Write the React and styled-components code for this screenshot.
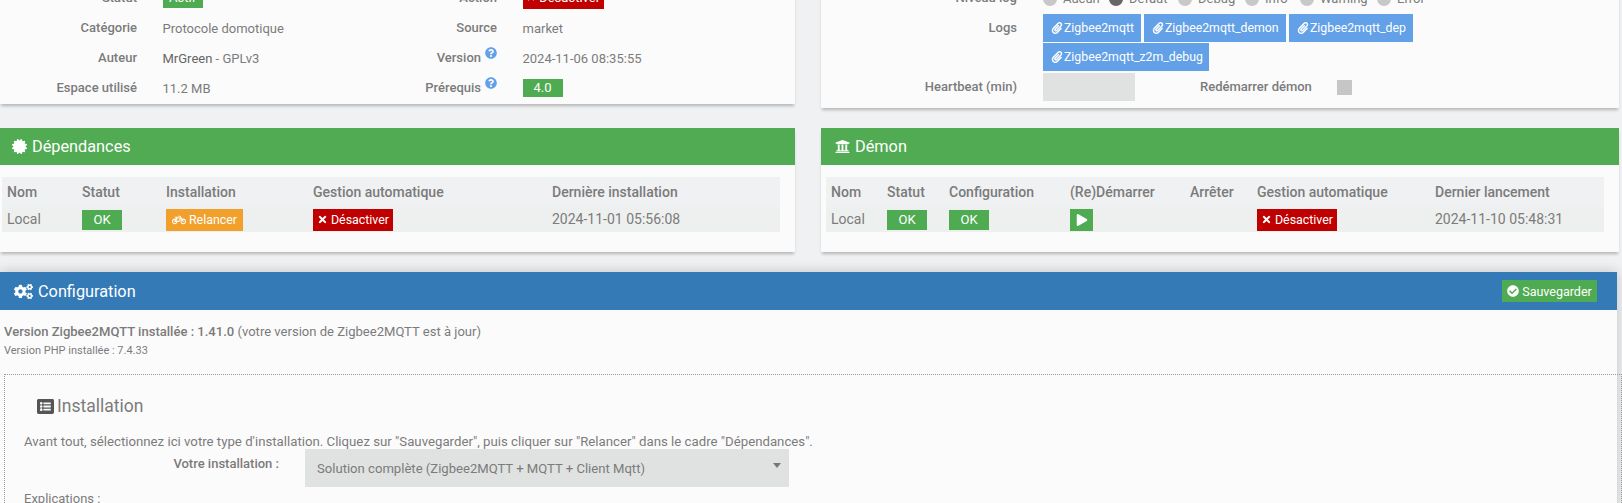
import styled, { createGlobalStyle } from "styled-components";
import {
  FaBicycle,
  FaCertificate,
  FaCheckCircle,
  FaCogs,
  FaListAlt,
  FaPaperclip,
  FaPlay,
  FaQuestionCircle,
  FaTimes,
  FaUniversity,
} from "react-icons/fa";

const GlobalStyle = createGlobalStyle`
  html, body {
    margin: 0;
    padding: 0;
    height: 503px;
    overflow: hidden;
    background: #f0f1f3;
  }
  body {
    font-family: Roboto, "Liberation Sans", sans-serif;
    font-size: 13px;
    color: #7b7b7b;
  }
`;

const Page = styled.div`
  width: 1622px;
  height: 503px;
  overflow: hidden;
`;

const Columns = styled.div`
  display: grid;
  grid-template-columns: 795px 798px;
  column-gap: 26px;
  align-items: start;
  margin-top: -17px;
`;

const Stack = styled.div`
  display: flex;
  flex-direction: column;
`;

const Panel = styled.section`
  background: #fbfbfb;
  box-shadow: 0 3px 3px -1px rgba(0, 0, 0, 0.25);
  margin-bottom: ${(p) => p.$gap || 20}px;
`;

const Header = styled.header`
  display: flex;
  align-items: center;
  justify-content: space-between;
  height: ${(p) => p.$height || 37}px;
  padding: 0 ${(p) => p.$right || 0}px 0 ${(p) => p.$left || 12}px;
  background: ${(p) => p.$color};
  color: #fff;
  font-size: 16.3px;
`;

const HeaderTitle = styled.div`
  display: flex;
  align-items: center;
  gap: 5px;
`;

const InfoGrid = styled.div`
  display: grid;
  grid-template-columns: 137px 200px 109px 1fr;
  column-gap: 25.5px;
  grid-auto-rows: 30px;
  align-items: center;
  padding-bottom: 1px;
`;

const Label = styled.div`
  text-align: right;
  font-weight: 500;
  line-height: 16px;
  white-space: nowrap;
`;

const Help = styled(FaQuestionCircle)`
  color: #62a0e8;
  font-size: 12px;
  margin: -3px 0 0 4px;
  vertical-align: top;
`;

const Value = styled.div`
  white-space: nowrap;
`;

const Strong = styled.span`
  font-weight: 500;
`;

const Author = styled.span`
  color: #666;
`;

const Badge = styled.span`
  display: inline-block;
  min-width: ${(p) => p.$width || 40}px;
  height: ${(p) => p.$height || 20}px;
  line-height: ${(p) => p.$height || 20}px;
  box-sizing: border-box;
  text-align: center;
  color: #fff;
  font-size: 13px;
  background: ${(p) => p.$color || "#4fab52"};
`;

const Action = styled.span`
  display: inline-flex;
  align-items: center;
  justify-content: center;
  gap: 3px;
  box-sizing: border-box;
  width: ${(p) => p.$width}px;
  height: 22px;
  color: #fff;
  font-size: 12.4px;
  background: ${(p) => p.$color};
`;

const SettingsGrid = styled.div`
  display: grid;
  grid-template-columns: 196px 1fr;
  column-gap: 26px;
  padding: 3px 0 7px;
`;

const RadioRow = styled.div`
  display: flex;
  align-items: center;
  box-sizing: border-box;
  height: 28px;
  padding-bottom: 3px;
`;

const RadioItem = styled.span`
  display: inline-flex;
  align-items: center;
  gap: 6px;
  width: ${(p) => p.$width}px;
`;

const Radio = styled.span`
  width: 14px;
  height: 14px;
  border-radius: 50%;
  background: ${(p) => (p.$on ? "#666" : "#c8c8c8")};
`;

const RowLabel = styled(Label)`
  line-height: 28px;
  margin-top: ${(p) => p.$top || 0}px;
`;

const LogList = styled.div`
  display: flex;
  flex-wrap: wrap;
  gap: 1px 3px;
  width: 372px;
`;

const LogButton = styled.span`
  display: inline-flex;
  align-items: center;
  gap: 1px;
  box-sizing: border-box;
  width: ${(p) => p.$width}px;
  height: 28px;
  padding-left: 8px;
  background: #62a0e8;
  color: #fff;
  font-size: 12.3px;
  white-space: nowrap;
`;

const HeartRow = styled.div`
  display: flex;
  align-items: center;
  margin-top: 2px;
`;

const GreyInput = styled.div`
  width: 92px;
  height: 28px;
  background: #e0e2e1;
`;

const RestartLabel = styled(Label)`
  margin-left: 65px;
  width: 137px;
  text-align: left;
`;

const GreyCheck = styled.span`
  width: 15px;
  height: 15px;
  background: #c6c6c6;
`;

const TableBody = styled.div`
  padding: 12px ${(p) => p.$right}px 20px ${(p) => p.$left}px;
`;

const Table = styled.table`
  width: 100%;
  table-layout: fixed;
  border-collapse: collapse;
  font-size: 14px;
`;

const Th = styled.th`
  box-sizing: border-box;
  width: ${(p) => p.$width}px;
  height: 30px;
  padding: 0 5px;
  text-align: left;
  font-weight: 500;
  background: #f0f1f2;
  white-space: nowrap;
`;

const Td = styled.td`
  height: 25px;
  padding: 0 5px;
  background: #eef0ef;
  white-space: nowrap;
  vertical-align: middle;
  line-height: 0;
`;

const CellText = styled.span`
  line-height: 25px;
`;

const ConfigPanel = styled(Panel)`
  width: 1617px;
  box-shadow: 0 0 12px rgba(0, 0, 0, 0.2);
  margin: 0;
  height: 240px;
`;

const SaveButton = styled.span`
  display: inline-flex;
  align-items: center;
  justify-content: center;
  gap: 3px;
  width: 95px;
  height: 22px;
  background: #4fab52;
  color: #fff;
  font-size: 12.5px;
`;

const ConfigBody = styled.div`
  padding: 14px 4px 0;
`;

const VersionLine = styled.div`
  font-size: 13.05px;
  line-height: 16px;
`;

const PhpLine = styled.div`
  font-size: 11px;
  line-height: 14px;
  margin-top: 4px;
`;

const Fieldset = styled.div`
  width: 1578px;
  margin-top: 16px;
  padding: 19px 19px 0;
  border: 1px dotted #999;
  border-bottom: none;
`;

const Legend = styled.h3`
  display: flex;
  align-items: center;
  gap: 3px;
  margin: 0 0 0 13px;
  font-size: 17.5px;
  font-weight: 400;
  line-height: 24px;
  svg {
    color: #555;
  }
`;

const Intro = styled.p`
  margin: 16px 0 0;
  font-size: 13.23px;
  line-height: 16px;
`;

const FieldRow = styled.div`
  display: flex;
  margin-top: -1px;
`;

const FieldLabel = styled(Label)`
  width: 255px;
  font-size: 13px;
  line-height: 30px;
`;

const Select = styled.div`
  position: relative;
  box-sizing: border-box;
  width: 484px;
  height: 38px;
  margin-left: 26px;
  padding-left: 12px;
  line-height: 39px;
  font-size: 13.1px;
  background: #e0e2e1;
  &::after {
    content: "";
    position: absolute;
    right: 8px;
    top: 14px;
    border: 4.5px solid transparent;
    border-top: 5px solid #777;
    border-bottom: none;
  }
`;

const Explain = styled.div`
  margin-top: 4px;
  font-size: 13px;
  line-height: 16px;
`;

const App = () => {
  return (
    <Page>
      <GlobalStyle />
      <Columns>
        <Stack>
          <Panel $gap={24}>
            <InfoGrid>
              <Label>Statut</Label>
              <Value><Badge>Actif</Badge></Value>
              <Label>Action</Label>
              <Value><Badge $width={81} $height={22} $color="#c00000"><FaTimes size={10} /> Désactiver</Badge></Value>
              <Label>Catégorie</Label>
              <Value>Protocole domotique</Value>
              <Label>Source</Label>
              <Value>market</Value>
              <Label>Auteur</Label>
              <Value><Author>MrGreen</Author> - GPLv3</Value>
              <Label>Version<Help /></Label>
              <Value>2024-11-06 08:35:55</Value>
              <Label>Espace utilisé</Label>
              <Value>11.2 MB</Value>
              <Label>Prérequis<Help /></Label>
              <Value><Badge $height={18}>4.0</Badge></Value>
            </InfoGrid>
          </Panel>
          <Panel>
            <Header $color="#50ab52">
              <HeaderTitle><FaCertificate size={15} />Dépendances</HeaderTitle>
            </Header>
            <TableBody $left={2} $right={15}>
              <Table>
                <thead>
                  <tr>
                    <Th $width={75}>Nom</Th>
                    <Th $width={84}>Statut</Th>
                    <Th $width={147}>Installation</Th>
                    <Th $width={239}>Gestion automatique</Th>
                    <Th>Dernière installation</Th>
                  </tr>
                </thead>
                <tbody>
                  <tr>
                    <Td><CellText>Local</CellText></Td>
                    <Td><Badge>OK</Badge></Td>
                    <Td><Action $width={77} $color="#f2a02c"><FaBicycle size={14} />Relancer</Action></Td>
                    <Td><Action $width={80} $color="#c00000"><FaTimes size={11} />Désactiver</Action></Td>
                    <Td><CellText>2024-11-01 05:56:08</CellText></Td>
                  </tr>
                </tbody>
              </Table>
            </TableBody>
          </Panel>
        </Stack>
        <Stack>
          <Panel>
            <SettingsGrid>
              <RowLabel $top={-2}>Niveau log</RowLabel>
              <RadioRow>
                <RadioItem $width={66}><Radio />Aucun</RadioItem>
                <RadioItem $width={69}><Radio $on />Defaut</RadioItem>
                <RadioItem $width={67}><Radio />Debug</RadioItem>
                <RadioItem $width={55}><Radio />Info</RadioItem>
                <RadioItem $width={77}><Radio />Warning</RadioItem>
                <RadioItem $width={60}><Radio />Error</RadioItem>
              </RadioRow>
              <RowLabel>Logs</RowLabel>
              <LogList>
                <LogButton $width={98}><FaPaperclip size={12} />Zigbee2mqtt</LogButton>
                <LogButton $width={142}><FaPaperclip size={12} />Zigbee2mqtt_demon</LogButton>
                <LogButton $width={124}><FaPaperclip size={12} />Zigbee2mqtt_dep</LogButton>
                <LogButton $width={166}><FaPaperclip size={12} />Zigbee2mqtt_z2m_debug</LogButton>
              </LogList>
              <RowLabel $top={2}>Heartbeat (min)</RowLabel>
              <HeartRow>
                <GreyInput />
                <RestartLabel>Redémarrer démon</RestartLabel>
                <GreyCheck />
              </HeartRow>
            </SettingsGrid>
          </Panel>
          <Panel>
            <Header $color="#50ab52" $left={14}>
              <HeaderTitle><FaUniversity size={15} />Démon</HeaderTitle>
            </Header>
            <TableBody $left={5} $right={15}>
              <Table>
                <thead>
                  <tr>
                    <Th $width={56}>Nom</Th>
                    <Th $width={62}>Statut</Th>
                    <Th $width={121}>Configuration</Th>
                    <Th $width={120}>(Re)Démarrer</Th>
                    <Th $width={67}>Arrêter</Th>
                    <Th $width={178}>Gestion automatique</Th>
                    <Th>Dernier lancement</Th>
                  </tr>
                </thead>
                <tbody>
                  <tr>
                    <Td><CellText>Local</CellText></Td>
                    <Td><Badge>OK</Badge></Td>
                    <Td><Badge>OK</Badge></Td>
                    <Td><Action $width={23} $color="#4fab52"><FaPlay size={12} /></Action></Td>
                    <Td />
                    <Td><Action $width={80} $color="#c00000"><FaTimes size={11} />Désactiver</Action></Td>
                    <Td><CellText>2024-11-10 05:48:31</CellText></Td>
                  </tr>
                </tbody>
              </Table>
            </TableBody>
          </Panel>
        </Stack>
      </Columns>
      <ConfigPanel>
        <Header $color="#337ab7" $height={38} $left={14} $right={20}>
          <HeaderTitle><FaCogs size={19} />Configuration</HeaderTitle>
          <SaveButton><FaCheckCircle size={12} />Sauvegarder</SaveButton>
        </Header>
        <ConfigBody>
          <VersionLine><Strong>Version Zigbee2MQTT installée : 1.41.0</Strong> (votre version de Zigbee2MQTT est à jour)</VersionLine>
          <PhpLine>Version PHP installée : 7.4.33</PhpLine>
          <Fieldset>
            <Legend><FaListAlt size={17} />Installation</Legend>
            <Intro>Avant tout, sélectionnez ici votre type d'installation. Cliquez sur "Sauvegarder", puis cliquer sur "Relancer" dans le cadre "Dépendances".</Intro>
            <FieldRow>
              <FieldLabel>Votre installation :</FieldLabel>
              <Select>Solution complète (Zigbee2MQTT + MQTT + Client Mqtt)</Select>
            </FieldRow>
            <Explain>Explications :</Explain>
          </Fieldset>
        </ConfigBody>
      </ConfigPanel>
    </Page>
  );
};

export default App;
